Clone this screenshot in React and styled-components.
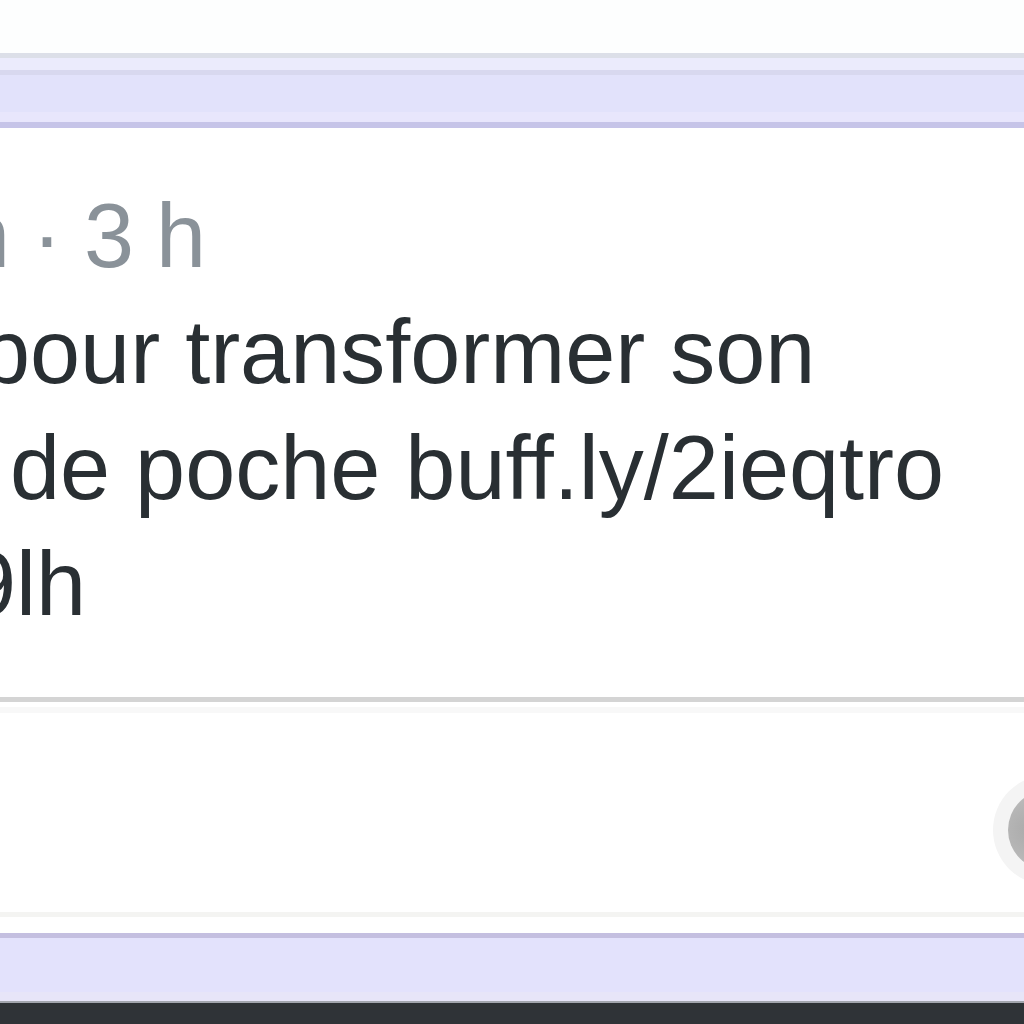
import React from "react";
import styled, { createGlobalStyle } from "styled-components";

const GlobalStyle = createGlobalStyle`
  html, body {
    margin: 0;
    padding: 0;
    background: #ffffff;
    overflow: hidden;
  }
`;

const Page = styled.div`
  width: 1024px;
  height: 1024px;
  overflow: hidden;
  display: flex;
  flex-direction: column;
  background: #fdfefe;
  font-family: "Liberation Sans", Arial, sans-serif;
`;

const TopSpace = styled.div`
  height: 53px;
  flex: none;
  background: #fdfefe;
`;

// layered lavender strip above the card
const TopBand = styled.div`
  height: 75px;
  flex: none;
  background: linear-gradient(
    to bottom,
    #dcdfe8 0px, #dcdfe8 5px,
    #ebebfc 5px, #ebebfc 17px,
    #d8d8ef 17px, #d8d8ef 22px,
    #e2e2fb 22px, #e2e2fb 59px,
    #e8e6fc 59px, #e8e6fc 69px,
    #c6c4e8 69px, #c6c4e8 75px
  );
`;

const Card = styled.div`
  flex: none;
  height: 805px;
  background: #ffffff;
  display: flex;
  flex-direction: column;
`;

const Body = styled.div`
  flex: none;
  padding-top: 50px;
  height: 569px;
  box-sizing: border-box;
  overflow: hidden;
`;

const Line = styled.div`
  font-size: 90px;
  line-height: 116px;
  height: 116px;
  white-space: nowrap;
  color: ${(p) => (p.muted ? "#8a9299" : "#292f33")};
  word-spacing: ${(p) => (p.muted ? "-3px" : "0")};
  margin-left: ${(p) => p.shift}px;
`;

const Divider = styled.div`
  flex: none;
  height: 5px;
  background: #d4d4d4;
  margin-bottom: 5px;
`;

const SoftLine = styled.div`
  flex: none;
  height: 6px;
  background: #f8f8f8;
`;

const Footer = styled.div`
  flex: none;
  height: 199px;
  display: flex;
  align-items: center;
  justify-content: flex-end;
  overflow: hidden;
`;

const ActionCircle = styled.div`
  flex: none;
  width: 110px;
  height: 110px;
  margin-right: -79px;
  margin-top: 34px;
  border-radius: 50%;
  background: #f4f4f4;
  display: flex;
  align-items: center;
  justify-content: center;
`;

const ActionCore = styled.div`
  width: 80px;
  height: 80px;
  border-radius: 50%;
  background: radial-gradient(circle at 30% 50%, #a9a9a9 0%, #b8b8b8 45%, #c9c9c9 100%);
`;

const FaintLine = styled.div`
  flex: none;
  height: 5px;
  background: #f4f4f2;
  margin-bottom: 16px;
`;

const BottomBand = styled.div`
  height: 70px;
  flex: none;
  background: linear-gradient(
    to bottom,
    #c4bfe0 0px, #c4bfe0 5px,
    #e3e2fc 5px, #e3e2fc 59px,
    #e7e5f8 59px, #e7e5f8 68px,
    #a3a6ae 68px, #a3a6ae 70px
  );
`;

const DarkBar = styled.div`
  flex: 1;
  background: #2f3337;
`;

export default function App() {
  return (
    <>
      <GlobalStyle />
      <Page>
        <TopSpace />
        <TopBand />
        <Card>
          <Body>
            <Line muted shift={-40}>n · 3 h</Line>
            <Line shift={-20}>pour transformer son</Line>
            <Line shift={10}>de poche buff.ly/2ieqtro</Line>
            <Line shift={-34}>9lh</Line>
          </Body>
          <Divider />
          <SoftLine />
          <Footer>
            <ActionCircle>
              <ActionCore />
            </ActionCircle>
          </Footer>
          <FaintLine />
        </Card>
        <BottomBand />
        <DarkBar />
      </Page>
    </>
  );
}
